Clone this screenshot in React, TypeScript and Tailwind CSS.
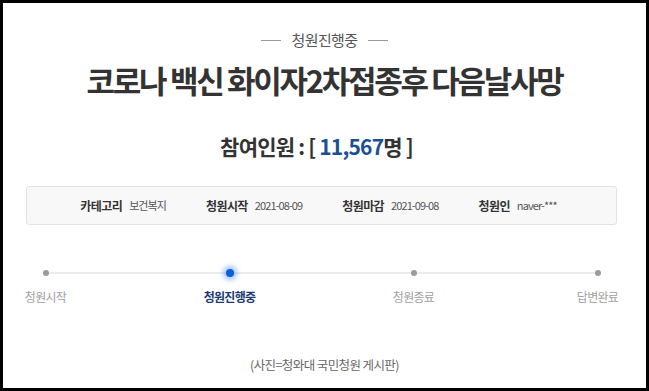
import React from "react";

const font = { fontFamily: '"Noto Sans CJK KR", "Noto Sans", sans-serif' };

function InfoItem({ label, value }: { label: string; value: string }) {
  return (
    <div className="flex items-center gap-[7px]">
      <span className="font-bold text-[#333] text-[12px] tracking-[-0.6px]">{label}</span>
      <span className="text-[#555] text-[11px] tracking-[-0.9px]">{value}</span>
    </div>
  );
}

function Step({ label, active }: { label: string; active?: boolean }) {
  return (
    <div className="relative w-0 flex flex-col items-center">
      <div className="h-[10px] flex items-center justify-center">
        {active ? (
          <div className="w-[8px] h-[8px] rounded-full bg-[#0a5fd6] shadow-[0_0_5px_3px_rgba(80,150,255,0.55)]" />
        ) : (
          <div className="w-[6px] h-[6px] rounded-full bg-[#9b9b9b]" />
        )}
      </div>
      <div
        className={
          "mt-[10px] whitespace-nowrap text-[12px] tracking-[-0.7px] " +
          (active ? "font-bold text-[#1d3b73]" : "text-[#a0a0a0]")
        }
      >
        {label}
      </div>
    </div>
  );
}

export default function App() {
  return (
    <div
      className="w-[649px] h-[391px] box-border border-[3px] border-black bg-white flex flex-col items-center"
      style={font}
    >
      <div className="mt-[27px] h-[20px] flex items-center gap-[10px] text-[#555]">
        <div className="w-[20px] h-px bg-[#999]" />
        <span className="text-[15px] tracking-[-0.6px]">청원진행중</span>
        <div className="w-[20px] h-px bg-[#999]" />
      </div>
      <h1 className="mt-[10px] h-[40px] leading-[40px] text-[31px] font-bold text-[#333] tracking-[-2.3px]">
        코로나 백신 화이자2차접종후 다음날사망
      </h1>
      <div className="mt-[32px] h-[28px] leading-[28px] text-[21px] font-bold text-[#333] tracking-[-0.8px] mr-[16px]">
        참여인원 : [ <span className="text-[#1d4f93]">11,567</span>명 ]
      </div>
      <div className="mt-[26px] w-[591px] h-[39px] rounded-[3px] border border-[#e3e3e3] bg-[#f8f8f8] flex items-center justify-center gap-[40px] pr-[6px] mr-[6px]">
        <InfoItem label="카테고리" value="보건복지" />
        <InfoItem label="청원시작" value="2021-08-09" />
        <InfoItem label="청원마감" value="2021-09-08" />
        <InfoItem label="청원인" value="naver-***" />
      </div>
      <div className="mt-[43px] w-[552px] relative flex justify-between mr-[6px]">
        <div className="absolute left-0 right-0 top-[4px] h-[2px] bg-[#ececec]" />
        <Step label="청원시작" />
        <Step label="청원진행중" active />
        <Step label="청원종료" />
        <Step label="답변완료" />
      </div>
      <div className="mt-[50px] text-[12.5px] text-[#666] tracking-[-0.6px]">
        (사진=청와대 국민청원 게시판)
      </div>
    </div>
  );
}
